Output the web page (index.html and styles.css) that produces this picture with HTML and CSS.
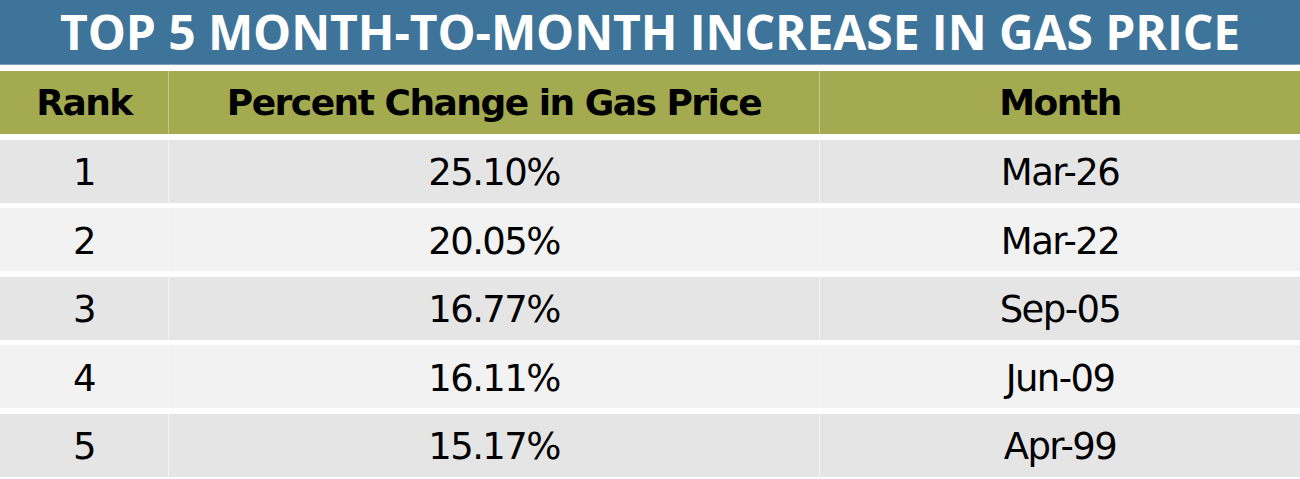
FILE: index.html
```html
<!DOCTYPE html>
<html lang="en">
<head>
<meta charset="utf-8">
<title>Top 5 Month-to-Month Increase in Gas Price</title>
<link rel="stylesheet" href="styles.css">
</head>
<body>
<div class="page">
  <h1 class="title">TOP 5 MONTH-TO-MONTH INCREASE IN GAS PRICE</h1>
  <div class="table">
    <div class="row head">
      <div class="cell">Rank</div>
      <div class="cell">Percent Change in Gas Price</div>
      <div class="cell">Month</div>
    </div>
    <div class="row odd">
      <div class="cell">1</div>
      <div class="cell">25.10%</div>
      <div class="cell">Mar-26</div>
    </div>
    <div class="row even">
      <div class="cell">2</div>
      <div class="cell">20.05%</div>
      <div class="cell">Mar-22</div>
    </div>
    <div class="row odd">
      <div class="cell">3</div>
      <div class="cell">16.77%</div>
      <div class="cell">Sep-05</div>
    </div>
    <div class="row even">
      <div class="cell">4</div>
      <div class="cell">16.11%</div>
      <div class="cell">Jun-09</div>
    </div>
    <div class="row odd">
      <div class="cell">5</div>
      <div class="cell">15.17%</div>
      <div class="cell">Apr-99</div>
    </div>
  </div>
</div>
</body>
</html>
```

FILE: styles.css
```css
html, body {
  margin: 0;
  padding: 0;
  background: #ffffff;
}

.page {
  width: 1300px;
  height: 479px;
  overflow: hidden;
  display: flex;
  flex-direction: column;
}

.title {
  margin: 0;
  height: 65px;
  background: #3e7499;
  border-bottom: 1px solid #7fa3bd;
  box-sizing: border-box;
  color: #ffffff;
  font-family: "Open Sans", "Liberation Sans", sans-serif;
  font-weight: 700;
  font-size: 48px;
  line-height: 64px;
  text-align: center;
  letter-spacing: -0.1px;
}

.table {
  margin-top: 6px;
  display: flex;
  flex-direction: column;
  gap: 5.5px;
}

.row {
  display: grid;
  grid-template-columns: 168px 651px 481px;
  height: 63px;
}

.cell {
  display: flex;
  align-items: center;
  justify-content: center;
  font-family: "DejaVu Sans", "Liberation Sans", sans-serif;
  color: #000000;
  box-sizing: border-box;
}

.cell + .cell {
  border-left: 1px solid #f4f4f4;
}

.head {
  background: #a3aa4f;
}

.head .cell {
  font-weight: 700;
  font-size: 36px;
  letter-spacing: -1.5px;
}

.head .cell + .cell {
  border-left-color: #c4c98e;
}

.odd {
  background: #e5e5e5;
}

.even {
  background: #f2f2f2;
}

.odd .cell, .even .cell {
  font-size: 37px;
  letter-spacing: -1.6px;
  padding-top: 3px;
}
```
